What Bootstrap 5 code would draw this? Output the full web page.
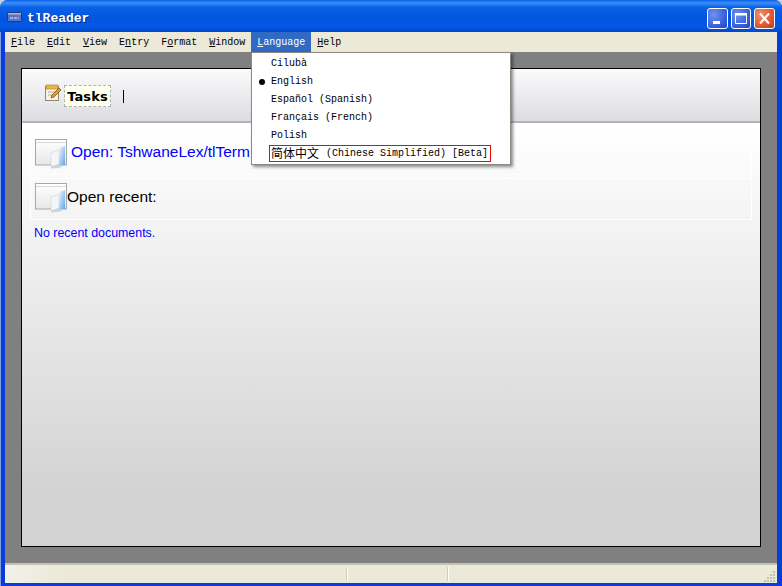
<!DOCTYPE html>
<html lang="en"><head><meta charset="utf-8"><title>tlReader</title>
<link rel="stylesheet" href="https://cdn.jsdelivr.net/npm/bootstrap@5.3.0/dist/css/bootstrap.min.css">
<style>
html,body{height:100%;margin:0;overflow:hidden}
body{background:#c9cfdc;font-family:"Liberation Sans",sans-serif}
.xp-window{width:782px;height:586px;background:#0a3cd8;border-radius:8px 8px 0 0;box-shadow:inset 1px 0 0 #7f9fe8;overflow:hidden}
.xp-title{height:32px;flex:none;background:linear-gradient(#0a5fe8 0,#3a90f8 3px,#0a62e8 7px,#0255dd 18px,#0458e4 27px,#0246c8 32px);padding:8px 7px 3px;color:#fff;font:bold 13px/21px "Liberation Mono",monospace;text-shadow:1px 1px 0 #0a2a90}
.xp-name{margin-left:5px;margin-top:0}
.xp-tico{margin-top:4px}
.xp-btn{width:20px;height:21px;border:1px solid #fff;border-radius:3px;background:radial-gradient(circle at 30% 30%,#6f93f0,#2c55d8 75%,#2040b8);padding:0;display:block}
.xp-btn svg{display:block}
.xp-wide{width:21px}
.xp-close{background:radial-gradient(circle at 30% 30%,#f09070,#d84a20 75%,#c03a18)}
.xp-btns{gap:3px}
.xp-menubar{height:20px;flex:none;margin:0 5px;background:#ece9d8;font:10px/21px "Liberation Mono",monospace;color:#000}
.xp-menuitem{padding:0 6px;height:20px;position:relative}
.xp-menuitem u{text-underline-offset:1px}
.xp-active{background:#316ac5;color:#fff}
.xp-drop.dropdown-menu{position:absolute;display:block;left:251px;top:52px;width:260px;height:113px;padding:2px 0 0;margin:0;border:1px solid #8a8a80;border-radius:0;background:#fff;box-shadow:2px 2px 3px rgba(0,0,0,.45);font:10px/18px "Liberation Mono","Noto Sans CJK SC",monospace;min-width:0;z-index:5;color:#000}
.xp-opt{height:18px;padding-left:19px;position:relative;white-space:nowrap}
.xp-dot{position:absolute;left:7px;top:6px;width:6px;height:6px;border-radius:50%;background:#000}
.xp-boxed{outline:1px solid #f00;height:15px;line-height:15px;width:220px;margin-left:-1px;padding-left:1px;margin-top:1px}
.xp-cjk{font-family:"Noto Sans CJK SC",sans-serif;font-size:12px;line-height:15px;margin-right:7px;margin-top:-1px}
.xp-desk{flex:1 1 0;min-height:0;margin:0 5px;background:#808080;padding:16px}
.xp-page{height:100%;border:1px solid #000;background:linear-gradient(#fff 60px,#d3d3d3 420px);overflow:hidden}
.xp-band{height:54px;background:linear-gradient(#fbfbfc,#dcdde1);border-bottom:2px solid #b4b4b8;padding:15px 0 0 22px}
.xp-tag{margin-left:2px;margin-top:1px;height:22px;width:47px;background:#ffffee;border:1px dashed #b0b0b0;font:bold 13px/21px "DejaVu Sans",sans-serif;text-align:center;color:#000;letter-spacing:.1px}
.xp-sep{margin-left:12px;margin-top:6px;width:1px;height:13px;background:#000}
.xp-panel{margin:0 8px 3px 8px;border:1px solid #fff;padding:8px 0 0 4px;color:#000;font-size:15.5px;line-height:20px}
.xp-p1{height:45px;margin-top:7px}
.xp-p2{height:42px;padding-top:4px}
.xp-rtext{margin-top:4px}
.xp-link{color:#00f;text-decoration:none;margin-left:4px;margin-top:3px;white-space:nowrap}
.xp-none{color:#00f;font-size:12.4px;line-height:16px;margin:5px 0 0 12px}
.xp-status{height:20px;flex:none;margin:0 5px;background:linear-gradient(90deg,#f2f1ea,#ece9d8 60px);border-top:2px solid #c5c2b0;position:relative}
.xp-cut{position:absolute;top:2px;bottom:2px;width:1px;background:#fff;box-shadow:-1px 0 0 #d0cdb9}
.xp-grip{position:absolute;right:1px;bottom:1px}
.xp-foot{height:3px;flex:none}
</style></head><body>
<div class="xp-window d-flex flex-column">
 <div class="xp-title d-flex align-items-start">
  <svg class="xp-tico" width="15" height="10" viewBox="0 0 15 10"><rect x=".5" y=".5" width="14" height="9" rx="1" fill="#5a74c4" stroke="#26367c"/><rect x="1" y="1" width="13" height="1.5" fill="#a8b6e6"/><path d="M3 6h1M5 5v2M7 6h1M9 5v2M11 6h1" stroke="#dfe6fa"/></svg>
  <span class="xp-name">tlReader</span>
  <div class="xp-btns ms-auto d-flex">
   <button class="xp-btn xp-wide" aria-label="Minimize"><svg width="19" height="19"><rect x="5" y="12" width="7" height="3" fill="#fff"/></svg></button>
   <button class="xp-btn" aria-label="Maximize"><svg width="18" height="19"><path d="M3.5 5.5h11v9h-11z" fill="none" stroke="#fff"/><rect x="3" y="4" width="12" height="2.5" fill="#fff"/></svg></button>
   <button class="xp-btn xp-wide xp-close" aria-label="Close"><svg width="19" height="19"><path d="M5 4.5l9 10M14 4.5l-9 10" stroke="#fff" stroke-width="2"/></svg></button>
  </div>
 </div>
 <div class="xp-menubar d-flex">
  <div class="xp-menuitem"><u>F</u>ile</div><div class="xp-menuitem"><u>E</u>dit</div><div class="xp-menuitem"><u>V</u>iew</div><div class="xp-menuitem">E<u>n</u>try</div><div class="xp-menuitem">F<u>o</u>rmat</div><div class="xp-menuitem"><u>W</u>indow</div><div class="xp-menuitem xp-active"><u>L</u>anguage</div><div class="xp-menuitem"><u>H</u>elp</div>
 </div>
 <div class="xp-drop dropdown-menu">
  <div class="xp-opt">Cilubà</div>
  <div class="xp-opt"><span class="xp-dot"></span>English</div>
  <div class="xp-opt">Español (Spanish)</div>
  <div class="xp-opt">Français (French)</div>
  <div class="xp-opt">Polish</div>
  <div class="xp-opt"><div class="xp-boxed d-flex"><span class="xp-cjk">简体中文</span><span>(Chinese Simplified) [Beta]</span></div></div>
 </div>
 <div class="xp-desk">
  <div class="xp-page">
   <div class="xp-band d-flex align-items-start">
    <svg width="18" height="18" viewBox="0 0 18 18"><rect x="1.5" y="2.5" width="13" height="14" fill="#f6f3e4" stroke="#8a8a7a"/><rect x="2" y="1" width="12" height="4" fill="#e8b840" stroke="#a8802a" stroke-width=".6"/><path d="M4 8h8M4 11h5" stroke="#b0b0a0"/><path d="M7 14l1-3 7-7 2 2-7 7z" fill="#e09a30" stroke="#7a4a10" stroke-width=".7"/></svg>
    <div class="xp-tag">Tasks</div>
    <div class="xp-sep"></div>
   </div>
   <div class="xp-panel xp-p1 d-flex align-items-start">
    <svg width="32" height="30" viewBox="0 0 32 30"><use href="#fold"/></svg>
    <a class="xp-link" href="#">Open: TshwaneLex/tlTerm</a>
   </div>
   <div class="xp-panel xp-p2 d-flex align-items-start">
    <svg width="32" height="30" viewBox="0 0 32 30"><defs><linearGradient id="wg" x1="0" y1="0" x2="0" y2="1"><stop offset="0" stop-color="#fff"/><stop offset="1" stop-color="#e6e8e8"/></linearGradient><linearGradient id="bg" x1="0" y1="0" x2="1" y2="1"><stop offset="0" stop-color="#f4f8ff"/><stop offset="1" stop-color="#5aa0e8"/></linearGradient><g id="fold"><rect x=".5" y=".5" width="31" height="25.5" fill="url(#wg)" stroke="#a4a8a8"/><path d="M1 3.5h30" stroke="#d8dada"/><path d="M16 14l8-3v14l-8 3z" fill="#f4f6f8" stroke="#c4ccd4" stroke-width=".5"/><path d="M24 9l6-2v19l-6 2z" fill="url(#bg)"/><path d="M16 27l14-1-6 3-8 .5z" fill="#cfd6de"/></g></defs><use href="#fold"/></svg>
    <span class="xp-rtext">Open recent:</span>
   </div>
   <div class="xp-none">No recent documents.</div>
  </div>
 </div>
 <div class="xp-status">
  <span class="xp-cut" style="left:342px"></span><span class="xp-cut" style="left:443px"></span>
  <svg class="xp-grip" width="12" height="12"><path d="M9 1h2v2H9zM6 4h2v2H6zM9 4h2v2H9zM3 7h2v2H3zM6 7h2v2H6zM9 7h2v2H9zM0 10h2v2H0zM3 10h2v2H3zM6 10h2v2H6zM9 10h2v2H9z" fill="#c4c1ae"/></svg>
 </div>
 <div class="xp-foot"></div>
</div>
</body></html>
